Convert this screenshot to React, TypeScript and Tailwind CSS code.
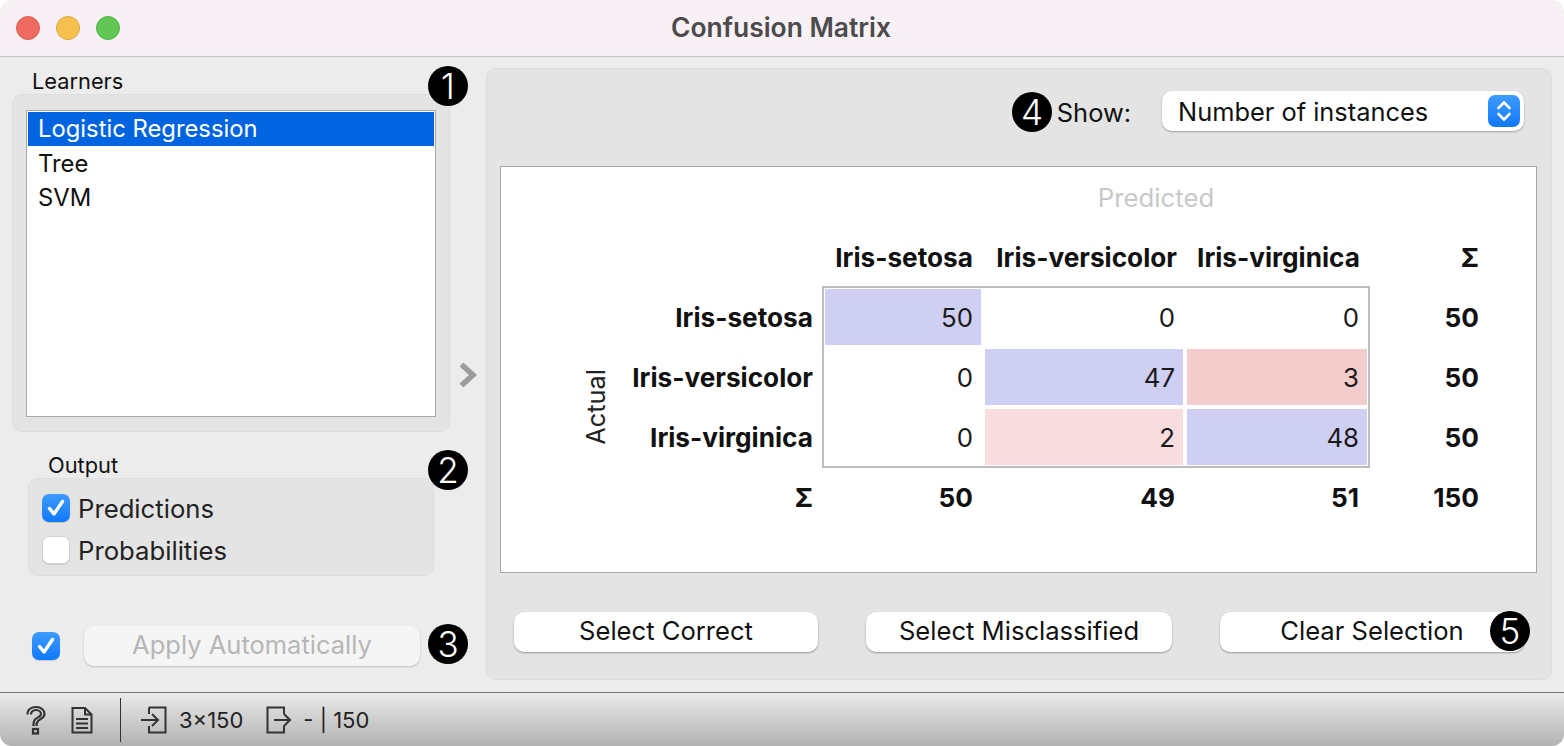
import React from "react";

const font = { fontFamily: "Inter, 'Liberation Sans', sans-serif" };

function Badge({ n, className }: { n: string; className: string }) {
  return (
    <div className={"absolute flex items-center justify-center rounded-full bg-black text-white text-[35px] leading-none font-light " + className}>
      {n}
    </div>
  );
}

function Check({ on, className = "" }: { on: boolean; className?: string }) {
  return on ? (
    <div className={"w-7 h-7 rounded-[7px] bg-gradient-to-b from-[#3d9bff] to-[#0a78fb] flex items-center justify-center shrink-0 shadow-[0_1px_1px_rgba(0,0,0,0.15)] " + className}>
      <svg width="20" height="20" viewBox="0 0 20 20" fill="none">
        <path d="M3.5 10.5 L8 16 L16.5 3.5" stroke="white" strokeWidth="3.4" strokeLinecap="round" strokeLinejoin="round" />
      </svg>
    </div>
  ) : (
    <div className={"w-7 h-7 rounded-[7px] bg-white border border-[#d2d2d2] shrink-0 shadow-[0_1px_1px_rgba(0,0,0,0.1)] " + className} />
  );
}

function Cell({ v, bg = "" }: { v: string; bg?: string }) {
  return (
    <div className={"m-[2px] flex items-center justify-end pr-2 pt-[1px] text-[#1a1a1a] " + bg}>{v}</div>
  );
}

function RowLabel({ children }: { children: React.ReactNode }) {
  return <div className="flex items-center justify-end pr-[10px] pt-[1px] font-bold text-[26.2px] text-[#111]">{children}</div>;
}

function Btn({ children, className }: { children: React.ReactNode; className: string }) {
  return (
    <button className={"h-10 pb-[2px] rounded-[10px] bg-white text-[#111] text-[25.6px] text-center shadow-[0_1px_2px_rgba(0,0,0,0.35)] " + className}>{children}</button>
  );
}

export default function App() {
  return (
    <div style={font} className="relative w-[1564px] h-[746px] overflow-hidden bg-white text-[24px] leading-[34px] text-[#111]">
      <div className="w-full h-full flex flex-col rounded-t-[12px] rounded-b-[12px] overflow-hidden">
        {/* Title bar */}
        <div className="relative h-[57px] shrink-0 flex items-center justify-center bg-[#f7f1f5] border-b border-[#c4c2c4]">
          <div className="absolute left-4 top-4 flex gap-4">
            <div className="w-6 h-6 rounded-full bg-[#ef6b60] border border-[#dc5a50]" />
            <div className="w-6 h-6 rounded-full bg-[#f6c04f] border border-[#e0a63d]" />
            <div className="w-6 h-6 rounded-full bg-[#61c654] border border-[#52b046]" />
          </div>
          <div className="font-semibold text-[26.4px] text-[#4c4a4c] -mt-[2px] -ml-[2px]">Confusion Matrix</div>
        </div>

        {/* Body */}
        <div className="flex-1 flex min-h-0 bg-[#ececec] border-b border-[#6e6e6e]">
          {/* Left column */}
          <div className="w-[438px] ml-3 shrink-0 flex flex-col pt-3">
            <div className="ml-5 h-6 leading-6 text-[21.8px]">Learners</div>
            <div className="mt-[1px] h-[338px] rounded-[10px] bg-[#e4e4e4] border border-[#dedede] pt-[15px] pl-[13px] pr-[13px]">
              <div className="h-[307px] bg-white border border-[#a9a9a9] p-px text-[23.8px]">
                <div className="h-[34px] pl-[10px] bg-[#0064e1] text-white">Logistic Regression</div>
                <div className="h-[34px] pl-[10px] pt-px">Tree</div>
                <div className="h-[34px] pl-[10px] pt-px">SVM</div>
              </div>
            </div>
            <div className="ml-9 mt-[21px] h-6 leading-6 text-[21.8px]">Output</div>
            <div className="ml-4 mt-[1px] w-[406px] h-[98px] rounded-[10px] bg-[#e4e4e4] border border-[#dedede] pt-[15px] pl-[13px] flex flex-col gap-[14px] text-[25.7px]">
              <div className="flex items-center gap-2 h-7 text-[#222]">
                <Check on={true} />
                <span className="pt-[1px]">Predictions</span>
              </div>
              <div className="flex items-center gap-2 h-7 text-[#222]">
                <Check on={false} />
                <span className="pt-[1px]">Probabilities</span>
              </div>
            </div>
            <div className="mt-[50px] ml-5 flex items-center h-10">
              <Check on={true} />
              <button className="ml-6 w-[336px] h-10 pb-[2px] rounded-[10px] bg-[#f5f5f5] text-[#b6b6b6] text-[25.5px] text-center shadow-[0_1px_2px_rgba(0,0,0,0.2)]">
                Apply Automatically
              </button>
            </div>
          </div>

          {/* Collapse arrow */}
          <div className="w-9 shrink-0 flex items-center justify-center">
            <svg width="22" height="28" viewBox="0 0 22 28" fill="none">
              <path d="M4.5 3.5 L16 14 L4.5 24.5" stroke="#9c9c9c" strokeWidth="5.5" />
            </svg>
          </div>

          {/* Right panel */}
          <div className="w-[1066px] h-[612px] mt-[11px] rounded-[10px] bg-[#e4e4e4] border border-[#dedede] flex flex-col">
            <div className="flex items-center justify-end pt-[22px] pr-[27px] h-[62px] shrink-0">
              <div className="mr-[31px] pt-[4px] text-[25.4px]">Show:</div>
              <div className="relative w-[362px] h-10 rounded-[10px] bg-white shadow-[0_1px_2px_rgba(0,0,0,0.3)] flex items-center pl-[16px]">
                <span className="pt-[2px] text-[25.4px]">Number of instances</span>
                <div className="absolute right-1 top-1 w-8 h-8 rounded-[7px] bg-gradient-to-b from-[#3d9bff] to-[#0a78fb] flex items-center justify-center">
                  <svg width="20" height="26" viewBox="0 0 20 26" fill="none">
                    <path d="M4.5 10 L10 4.5 L15.5 10 M4.5 16 L10 21.5 L15.5 16" stroke="white" strokeWidth="2.6" strokeLinecap="round" strokeLinejoin="round" />
                  </svg>
                </div>
              </div>
            </div>

            <div className="ml-[13px] mt-[35px] w-[1037px] h-[407px] shrink-0 bg-white border border-[#a8a8a8]">
              <div className="ml-[79px] grid grid-cols-[32px_211px_160px_202px_184px_120px] grid-rows-[60px_60px_60px_60px_60px_60px] text-[25.8px]">
                <div className="col-start-3 col-span-4 flex items-center justify-center pt-[1px] text-[#c8c8c8]">Predicted</div>

                <div className="col-start-3 flex items-center justify-end pr-[10px] pt-[1px] font-bold text-[26.2px]">Iris-setosa</div>
                <div className="flex items-center justify-end pr-2 pt-[1px] font-bold text-[26.2px]">Iris-versicolor</div>
                <div className="flex items-center justify-end pr-[9px] pt-[1px] font-bold text-[26.2px]">Iris-virginica</div>
                <div className="flex items-center justify-end pr-[10px] pt-[1px] font-bold text-[26.2px]">Σ</div>

                <div className="row-start-3 row-span-4 col-start-1 flex items-center justify-center">
                  <span className="[writing-mode:vertical-rl] rotate-180 text-[25.4px] text-[#222]">Actual</span>
                </div>
                <div className="row-start-3 col-start-3 col-span-3 row-span-3 -mx-px -my-px border-2 border-[#bdbdbd]" />

                <div className="row-start-3 col-start-2 grid"><RowLabel>Iris-setosa</RowLabel></div>
                <div className="row-start-3 col-start-3 grid"><Cell v="50" bg="bg-[#cfcff3]" /></div>
                <div className="row-start-3 col-start-4 grid"><Cell v="0" /></div>
                <div className="row-start-3 col-start-5 grid"><Cell v="0" /></div>
                <div className="row-start-3 col-start-6 grid"><RowLabel>50</RowLabel></div>

                <div className="row-start-4 col-start-2 grid"><RowLabel>Iris-versicolor</RowLabel></div>
                <div className="row-start-4 col-start-3 grid"><Cell v="0" /></div>
                <div className="row-start-4 col-start-4 grid"><Cell v="47" bg="bg-[#cfcff3]" /></div>
                <div className="row-start-4 col-start-5 grid"><Cell v="3" bg="bg-[#f3cccc]" /></div>
                <div className="row-start-4 col-start-6 grid"><RowLabel>50</RowLabel></div>

                <div className="row-start-5 col-start-2 grid"><RowLabel>Iris-virginica</RowLabel></div>
                <div className="row-start-5 col-start-3 grid"><Cell v="0" /></div>
                <div className="row-start-5 col-start-4 grid"><Cell v="2" bg="bg-[#f8dcde]" /></div>
                <div className="row-start-5 col-start-5 grid"><Cell v="48" bg="bg-[#cfcff3]" /></div>
                <div className="row-start-5 col-start-6 grid"><RowLabel>50</RowLabel></div>

                <div className="row-start-6 col-start-2 grid"><RowLabel>Σ</RowLabel></div>
                <div className="row-start-6 col-start-3 grid"><RowLabel>50</RowLabel></div>
                <div className="row-start-6 col-start-4 grid"><RowLabel>49</RowLabel></div>
                <div className="row-start-6 col-start-5 grid"><RowLabel>51</RowLabel></div>
                <div className="row-start-6 col-start-6 grid"><RowLabel>150</RowLabel></div>
              </div>
            </div>

            <div className="mt-[39px] ml-[27px] flex">
              <Btn className="w-[304px]">Select Correct</Btn>
              <Btn className="w-[306px] ml-12">Select Misclassified</Btn>
              <Btn className="w-[304px] ml-12">Clear Selection</Btn>
            </div>
          </div>
        </div>

        {/* Status bar */}
        <div className="h-[53px] shrink-0 flex items-center bg-gradient-to-b from-[#ebebeb] to-[#b2b2b2] text-[22px] text-[#222]">
          <svg className="ml-[24px]" width="24" height="30" viewBox="0 0 24 30" fill="none" stroke="#333" strokeWidth="2.2">
            <path d="M3.5 9.5 C3.5 4.5 7.5 2 12 2 C17 2 20.5 5 20.5 9 C20.5 13 16 14 14 16 C13 17 12.5 18 12.5 21" />
            <path d="M7 9.5 C7 7 9 5 12 5 C15 5 17 7 17 9 C17 11.5 13 12.5 11 14.5 C10 15.5 9.5 17 9.5 21" />
            <rect x="9" y="24" width="5" height="4.5" />
          </svg>
          <svg className="ml-[23px]" width="22" height="28" viewBox="0 0 22 28" fill="none" stroke="#333" strokeWidth="2">
            <path d="M1.5 2 H14 L20.5 8.5 V26.5 H1.5 Z" />
            <path d="M14 2 V8.5 H20.5" />
            <path d="M5 13 H17 M5 17.5 H17 M5 22 H17" />
          </svg>
          <div className="ml-[27px] w-px h-[44px] bg-[#333]" />
          <svg className="ml-[20px]" width="26" height="28" viewBox="0 0 26 28" fill="none" stroke="#333" strokeWidth="2">
            <path d="M8 1.5 H24.5 V26.5 H8 V20 M8 8 V1.5" strokeWidth="2" />
            <path d="M0 14 H17 M11 8 L17 14 L11 20" />
          </svg>
          <span className="ml-[12px]">3×150</span>
          <svg className="ml-[23px]" width="26" height="28" viewBox="0 0 26 28" fill="none" stroke="#333" strokeWidth="2">
            <path d="M18 8 V1.5 H1.5 V26.5 H18 V20" />
            <path d="M8 14 H24 M18 8 L24 14 L18 20" />
          </svg>
          <span className="ml-[11px]">- | 150</span>
        </div>
      </div>

      {/* Annotation badges */}
      <Badge n="1" className="left-[428px] top-[66px] w-10 h-10" />
      <Badge n="2" className="left-[428px] top-[450px] w-10 h-10" />
      <Badge n="3" className="left-[428px] top-[624px] w-10 h-10" />
      <Badge n="4" className="left-[1012px] top-[92px] w-10 h-10" />
      <Badge n="5" className="left-[1490px] top-[611px] w-10 h-10" />
    </div>
  );
}
